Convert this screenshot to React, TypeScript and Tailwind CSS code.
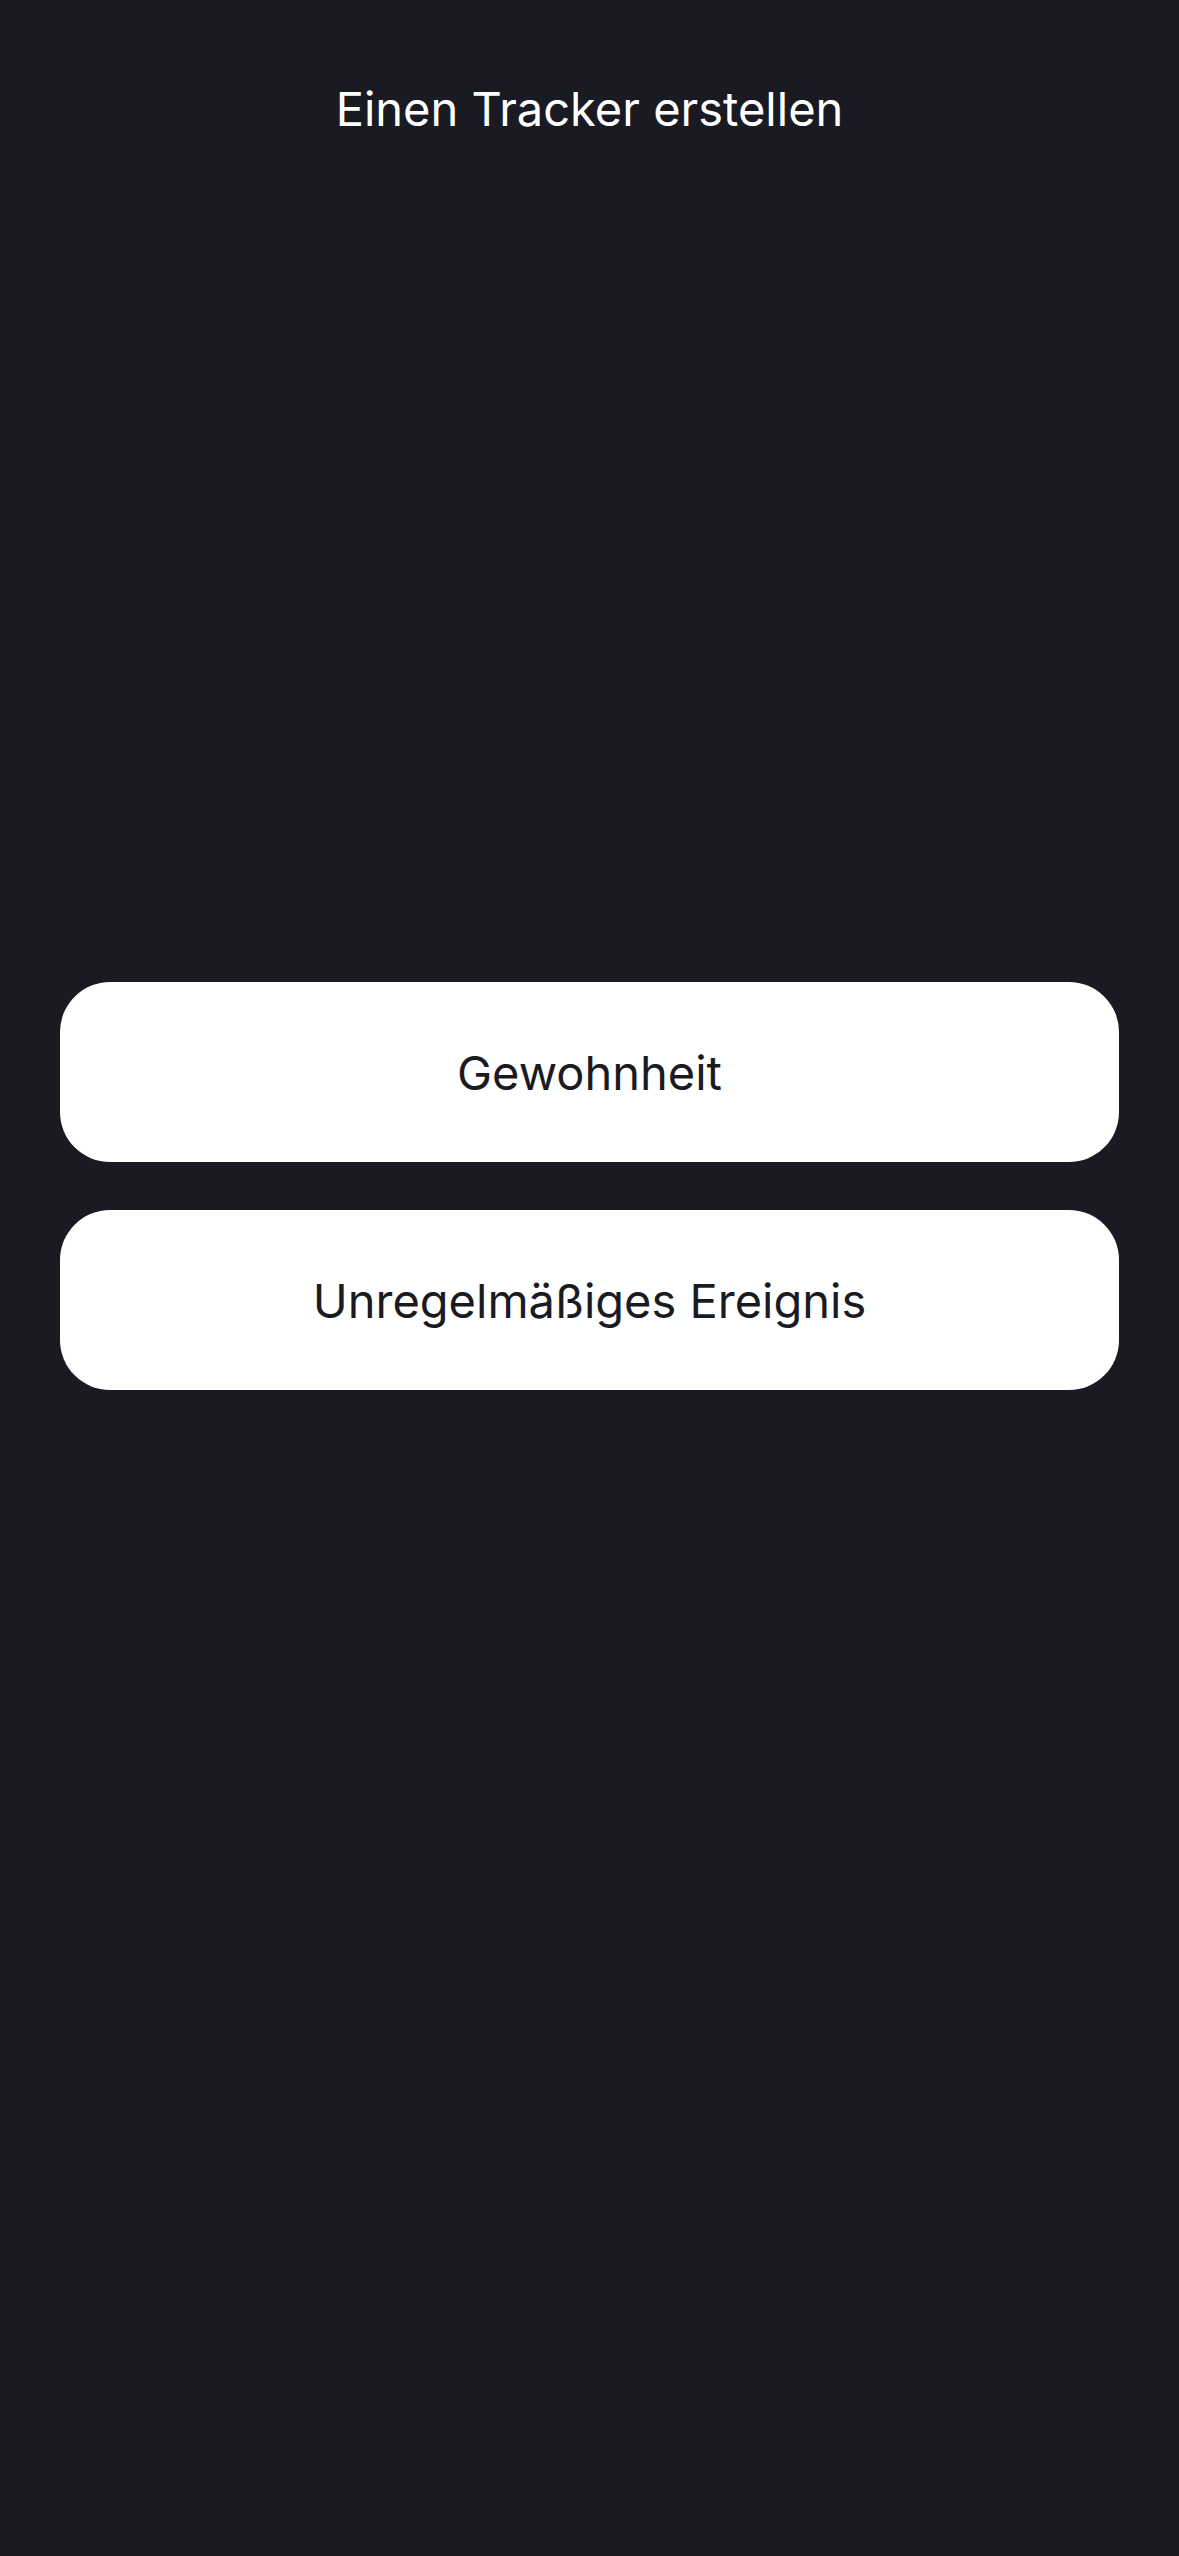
export default function App() {
  return (
    <div
      className="w-[1179px] h-[2556px] bg-[#1a1b22] flex flex-col"
      style={{ fontFamily: "Inter, 'Noto Sans', sans-serif" }}
    >
      <div className="h-[220px] pt-[77px] flex justify-center">
        <h1 className="text-[47px] leading-[64px] text-white font-normal">Einen Tracker erstellen</h1>
      </div>
      <div className="flex flex-col gap-[48px] px-[60px] mt-[762px]">
        <button className="h-[180px] rounded-[50px] bg-white text-[#1a1b22] text-[47px] leading-none flex items-center justify-center">
          Gewohnheit
        </button>
        <button className="h-[180px] rounded-[50px] bg-white text-[#1a1b22] text-[47px] leading-none flex items-center justify-center">
          Unregelmäßiges Ereignis
        </button>
      </div>
    </div>
  );
}
